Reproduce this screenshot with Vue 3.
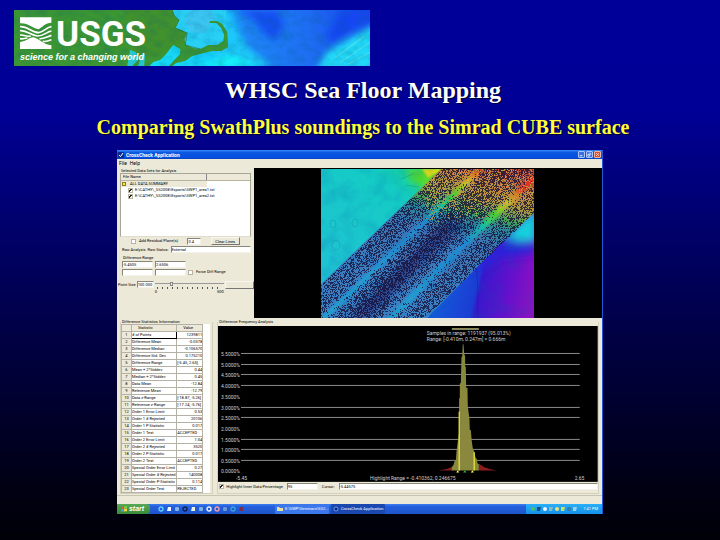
<script setup>
import { ref } from 'vue'

const files = [
  { name: 'E:\\CATHY\\_SS2008\\Exports\\SWP1_area1.txt', on: true },
  { name: 'E:\\CATHY\\_SS2008\\Exports\\SWP1_area2.txt', on: true }
]

const stats = [
  ['# of Points', '1239811'],
  ['Difference Mean', '-0.0378'],
  ['Difference Median', '-0.106570'],
  ['Difference Std. Dev', '0.175210'],
  ['Difference Range', '[-5.45, 2.65]'],
  ['Mean + 2*Stddev', '0.44'],
  ['Median + 2*Stddev', '0.45'],
  ['Data Mean', '-12.84'],
  ['Reference Mean', '-12.79'],
  ['Data z-Range', '[-18.87, -5.26]'],
  ['Reference z-Range', '[-17.24, -5.76]'],
  ['Order 1 Error Limit', '0.53'],
  ['Order 1 # Rejected', '20106'],
  ['Order 1 P-Statistic', '0.017'],
  ['Order 1 Test', 'ACCEPTED'],
  ['Order 2 Error Limit', '1.04'],
  ['Order 2 # Rejected', '3520'],
  ['Order 2 P-Statistic', '0.017'],
  ['Order 2 Test', 'ACCEPTED'],
  ['Special Order Error Limit', '0.27'],
  ['Special Order # Rejected', '140008'],
  ['Special Order P-Statistic', '0.114'],
  ['Special Order Test', 'REJECTED']
]
const isLeft = (v) => /^[A-Z[]/.test(v)

const axis = [
  { t: '5.5000%', y: 28, line: true },
  { t: '5.0000%', y: 39, line: true },
  { t: '4.5000%', y: 49, line: true },
  { t: '4.0000%', y: 60, line: true },
  { t: '3.5000%', y: 71, line: false },
  { t: '3.0000%', y: 82, line: true },
  { t: '2.5000%', y: 92, line: true },
  { t: '2.0000%', y: 103, line: false },
  { t: '1.5000%', y: 114, line: true },
  { t: '1.0000%', y: 124, line: true },
  { t: '0.5000%', y: 135, line: true },
  { t: '0.0000%', y: 145, line: false }
]

// Sounding speckle: one-pixel marks inside the survey swath, denser between the tracks.
function speckle() {
  let seed = 90210
  const rnd = () => {
    seed = (seed * 1664525 + 1013904223) % 4294967296
    return seed / 4294967296
  }
  const bell = (u, c, w) => Math.exp(-((u - c) ** 2) / (2 * w * w))
  let dark = ''
  let warm = ''
  let lime = ''
  for (let y = 0; y < 149; y++) {
    for (let x = 0; x < 213; x++) {
      const u = 0.69 * x + 0.72 * y
      const r = rnd()
      if (u < 83 || u > 178) continue
      const d = 0.46 + 0.16 * bell(u, 127, 7) - 0.42 * bell(u, 108, 3) - 0.42 * bell(u, 153, 4)
      const top = y < 36 + rnd() * 16 - (x - 150) * 0.1
      if (r < d) dark += `M${x} ${y}h1`
      else if (r > 0.88 && top && x > 104) warm += `M${x} ${y}h1`
      else if (r > 0.8 && top && x > 104) lime += `M${x} ${y}h1`
    }
  }
  return { dark, warm, lime }
}
const dots = speckle()

const highlight = ref(true)
const quick = ['#5fd0ff', '#e8f6ff', '#b5d8ff', '#10224e', '#f0f0e0', '#9fdcff', '#e9f2ff', '#f29aa8', '#8fb4e8', '#3aa0d8', '#7a3048']
const tray = ['#4ac06a', '#19508c', '#eef6ff', '#8ab8c8', '#f0e070', '#c8e060', '#3a78b0', '#9fd0f0']
</script>

<template>
  <main class="slide">
    <svg class="banner" viewBox="0 0 356 56" role="img" aria-label="USGS science for a changing world">
      <defs>
        <linearGradient id="sea" x1="150" y1="40" x2="356" y2="0" gradientUnits="userSpaceOnUse">
          <stop offset="0" stop-color="#18dcf8" />
          <stop offset=".28" stop-color="#14c8fa" />
          <stop offset=".4" stop-color="#1e84f6" />
          <stop offset=".7" stop-color="#1e6cf2" />
          <stop offset="1" stop-color="#1844f0" />
        </linearGradient>
        <filter id="soft" x="-20%" y="-20%" width="140%" height="140%"><feGaussianBlur stdDeviation="3" /></filter>
        <filter id="relief" x="0" y="0" width="100%" height="100%">
          <feTurbulence type="fractalNoise" baseFrequency=".09 .13" numOctaves="4" seed="6" />
          <feColorMatrix values="0 0 0 0 0  0 0 0 0 .1  0 0 0 0 .2  1.6 0 0 0 -.62" />
        </filter>
      </defs>
      <rect width="356" height="56" fill="url(#sea)" />
      <g filter="url(#soft)">
        <path d="M214 0L222 20L234 38L258 56H200V0Z" fill="#1cc8fa" />
        <path d="M222 0H262L270 14L262 30L250 24L240 10ZM312 26L326 2L348 2L336 22L318 34Z" fill="#1640f0" opacity=".75" />
        <path d="M360 14L332 30L312 42L302 60H360Z" fill="#20d8f8" />
        <path d="M180 58L215 44L250 58Z" fill="#18f0fa" />
      </g>
      <path d="M158 0H212V40H166Z" fill="#28d0f6" />
      <path d="M176 0H196L202 8L190 24L176 22L170 10Z" fill="#48c0f0" opacity=".6" />
      <path d="M320 48L350 26M326 52L356 32M334 54L356 42" stroke="#6ce8e4" stroke-width="1" opacity=".6" />
      <path d="M0 0H158L160 6L165 10L161 18L167 20L173 23L170 29L172 35L179 38L186 39L194 35L203 35L209 31L210 25L207 18L202 13L195 13L196 11L203 11L208 14L213 22L214 37L207 41L198 41L186 44L178 46L171 51L162 53L158 56H155L160 50L166 44L166 39L159 35L152 44L146 50L139 52L135 56H0Z" fill="#3c9632" />
      <path d="M110 0H158L163 10L160 18L172 24L170 34L158 34L146 46L120 50Z" fill="#468c28" opacity=".5" />
      <path d="M116 40L122 42L124 50L118 56H113ZM127 45L131 44L130 56H124Z" fill="#28c8d0" />
      <path d="M158 0L160 6L165 10L161 18L173 23L171 35L186 39" fill="none" stroke="#2f6a20" stroke-width=".6" />
      <rect width="356" height="56" filter="url(#relief)" opacity=".28" />
      <g transform="translate(-14 -10) scale(.3334)">
        <path d="M60 52H154V68C136 68 128 80 116 88C98 86 84 68 60 70Z" fill="#fff" />
        <path d="M60 147V126C80 124 90 110 100 112C118 116 130 134 154 136V147Z" fill="#fff" />
        <path d="M60 80C84 78 94 98 116 98C132 96 138 82 154 80M60 92C80 90 92 106 112 108C132 108 138 96 154 93M60 105C74 104 82 112 92 108M118 116C130 118 140 110 154 106M128 124C138 126 144 122 154 119M60 116C68 117 74 116 82 114" fill="none" stroke="#fff" stroke-width="5" />
      </g>
      <text x="42" y="36" class="usgs">USGS</text>
      <text x="6" y="50" class="tagline">science for a changing world</text>
    </svg>

    <header class="headings">
      <h1>WHSC Sea Floor Mapping</h1>
      <h2>Comparing SwathPlus soundings to the Simrad CUBE surface</h2>
    </header>

    <section class="window">
      <div class="titlebar">
        <svg class="appicon" viewBox="0 0 6 6"><rect width="6" height="6" rx="1" fill="#0a2a90" /><path d="M1 3L2.5 4.6L5 1" fill="none" stroke="#fff" /></svg>
        <span class="apptitle">CrossCheck Application</span>
        <button class="winbtn" aria-label="Minimize"><svg viewBox="0 0 6 6"><path d="M1 4.5H4" stroke="#fff" /></svg></button>
        <button class="winbtn" aria-label="Restore"><svg viewBox="0 0 6 6"><path d="M2 1.5H4.5V4M1 3H3V5H1Z" stroke="#fff" fill="none" stroke-width=".8" /></svg></button>
        <button class="winbtn close" aria-label="Close"><svg viewBox="0 0 6 6"><path d="M1.5 1.5L4.5 4.5M4.5 1.5L1.5 4.5" stroke="#fff" /></svg></button>
      </div>
      <nav class="menu"><a href="#">File</a><a href="#">Help</a></nav>

      <div class="upper">
        <div class="side">
          <fieldset class="group">
            <legend>Selected Data Sets for Analysis</legend>
            <div class="list">
              <div class="listhead"><span>File Name</span><span></span></div>
              <div class="summary"><i class="folder"></i>ALL DATA SUMMARY</div>
              <label v-for="f in files" :key="f.name" class="file"><input type="checkbox" :checked="f.on" />{{ f.name }}</label>
            </div>
            <div class="line residual">
              <label class="check"><input type="checkbox" />Add Residual Plane(s)</label>
              <input class="field tiny" aria-label="Plane size" value="0.4" />
              <button class="btn">Clear Lines</button>
            </div>
            <div class="line status">
              <span>Raw Analysis</span>
              <label for="status">Raw Status:</label>
              <input id="status" class="field grow" value="External" />
            </div>
          </fieldset>
          <fieldset class="group range">
            <legend>Difference Range</legend>
            <div class="line">
              <input class="field" aria-label="Minimum" value="-5.4505" /><input class="field" aria-label="Maximum" value="2.6506" />
            </div>
            <div class="line">
              <input class="field" aria-label="Forced minimum" /><input class="field" aria-label="Forced maximum" />
              <label class="check"><input type="checkbox" />Force Diff Range</label>
            </div>
          </fieldset>
          <div class="line point">
            <label for="psize">Point Size</label>
            <input id="psize" class="field mid" value="100.000" />
            <div class="slider">
              <input type="range" min="0" max="500" value="120" aria-label="Point size" />
              <div class="ticks"></div>
              <div class="ends"><span>0</span><span>500</span></div>
            </div>
            <button class="btn blank" aria-label="Apply"></button>
          </div>
        </div>

        <div class="view">
          <svg class="map" viewBox="0 0 213 149" role="img" aria-label="Sounding map">
            <defs>
              <linearGradient id="swath" x1="125" y1="140" x2="164" y2="0" gradientUnits="userSpaceOnUse">
                <stop offset="0" stop-color="#3c80c4" />
                <stop offset=".5" stop-color="#3c74b4" />
                <stop offset=".63" stop-color="#2c8898" />
                <stop offset=".7" stop-color="#48a058" />
                <stop offset=".8" stop-color="#a89838" />
                <stop offset=".92" stop-color="#b87838" />
                <stop offset="1" stop-color="#c04c30" />
              </linearGradient>
              <linearGradient id="track" x1="90" y1="149" x2="164" y2="0" gradientUnits="userSpaceOnUse">
                <stop offset="0" stop-color="#20a0d0" />
                <stop offset=".55" stop-color="#2088d0" />
                <stop offset=".68" stop-color="#18c0a8" />
                <stop offset=".78" stop-color="#50d828" />
                <stop offset=".88" stop-color="#d0c828" />
                <stop offset="1" stop-color="#e03020" />
              </linearGradient>
              <linearGradient id="deep" x1="120" y1="120" x2="213" y2="140" gradientUnits="userSpaceOnUse">
                <stop offset="0" stop-color="#1458d8" />
                <stop offset=".36" stop-color="#1c3cd4" />
                <stop offset=".4" stop-color="#3818cc" />
                <stop offset=".7" stop-color="#6410cc" />
                <stop offset="1" stop-color="#9410c0" />
              </linearGradient>
              <linearGradient id="shelf" x1="0" y1="120" x2="110" y2="0" gradientUnits="userSpaceOnUse">
                <stop offset="0" stop-color="#20c0d4" />
                <stop offset=".75" stop-color="#14ccc4" />
                <stop offset=".9" stop-color="#14d0a0" />
                <stop offset="1" stop-color="#20d878" />
              </linearGradient>
              <filter id="haze" x="-30%" y="-30%" width="160%" height="160%"><feGaussianBlur stdDeviation="4" /></filter>
              <filter id="blend" x="-10%" y="-10%" width="120%" height="120%"><feGaussianBlur stdDeviation="1.2" /></filter>
              <filter id="ripple" x="0" y="0" width="100%" height="100%">
                <feTurbulence type="fractalNoise" baseFrequency=".06" numOctaves="3" seed="11" />
                <feColorMatrix values="0 0 0 0 0  0 0 0 0 .1  0 0 0 0 .4  1.4 0 0 0 -.6" />
              </filter>
              <clipPath id="frame"><rect width="213" height="149" /></clipPath>
            </defs>
            <g clip-path="url(#frame)">
              <rect width="213" height="149" fill="url(#shelf)" />
              <path d="M84 0L92 14L110 20L132 0Z" fill="#58e020" filter="url(#haze)" />
              <path d="M101 0L107 9L122 0Z" fill="#e8e010" filter="url(#blend)" />
              <path d="M106 149L154 93L184 68L213 40V149Z" fill="url(#deep)" />
              <path d="M150 98L184 72L213 76V84L180 88L156 104Z" fill="#2c20dc" filter="url(#haze)" />
              <path d="M181 70L216 36V73L198 75Z" fill="#18d0dc" filter="url(#haze)" />
              <path d="M154 92C158 108 156 126 157 149" stroke="#1c20a0" fill="none" opacity=".6" />
              <path d="M0 115L120 0H213V44L184 70L106 149H0Z" fill="url(#swath)" />
              <path d="M28 149L130 46L144 52L48 149Z" fill="#281464" opacity=".6" filter="url(#haze)" />
              <g filter="url(#blend)">
                <path d="M0 152L109 48L160 0" stroke="url(#track)" stroke-width="5" fill="none" />
                <path d="M68 152L109 109L164 55L216 6" stroke="url(#track)" stroke-width="6" fill="none" />
              </g>
              <g fill="none" stroke="#177a90" opacity=".3">
                <ellipse cx="12" cy="55" rx="3" ry="4" /><ellipse cx="34" cy="54" rx="3" ry="4" />
                <ellipse cx="15" cy="76" rx="4" ry="5" /><path d="M80 10L94 4M84 16L98 18" />
              </g>
              <rect width="213" height="149" filter="url(#ripple)" opacity=".3" />
              <g fill="none" stroke-width="1">
                <path :d="dots.dark" stroke="#140e34" transform="translate(0 .5)" opacity=".76" />
                <path :d="dots.warm" stroke="#dc8c48" transform="translate(0 .5)" opacity=".8" />
                <path :d="dots.lime" stroke="#a8b840" transform="translate(0 .5)" opacity=".8" />
              </g>
            </g>
          </svg>
        </div>
      </div>

      <div class="lower">
        <fieldset class="group statbox">
          <legend>Difference Statistics Information</legend>
          <div class="tablewrap">
            <table>
              <thead><tr><th></th><th>Statistic</th><th>Value</th></tr></thead>
              <tbody>
                <tr v-for="(s, i) in stats" :key="s[0]">
                  <th scope="row">{{ i + 1 }}</th>
                  <td :class="{ picked: i === 0 }">{{ s[0] }}</td>
                  <td :class="isLeft(s[1]) ? 'left' : 'num'">{{ s[1] }}</td>
                </tr>
              </tbody>
            </table>
          </div>
        </fieldset>

        <fieldset class="group chartbox">
          <legend>Difference Frequency Analysis</legend>
          <svg class="chart" viewBox="0 0 380 156" role="img" aria-label="Difference frequency histogram">
            <rect width="380" height="156" fill="#000" />
            <g v-for="a in axis" :key="a.t">
              <path v-if="a.line" :d="`M23 ${a.y - 0.5}H362`" stroke="#8c8c8c" />
              <text x="3" :y="a.y + 2">{{ a.t }}</text>
            </g>
            <g transform="translate(192 -11) scale(.3334)">
              <path d="M88 467L110 462L125 457V467ZM207 446L222 456L240 462L260 467H207Z" fill="#8c1c1c" />
              <path d="M125 467V458L131 450L135 437H138L140 410L144 380L147 355L148 250H150V205H153L155 125H157L159 88H161L163 115L166 125V155H168L169 218H173L174 275L179 312L180 345H183L186 380L189 400L194 412L197 428L201 432L203 445L207 448V467Z" fill="#8a883c" />
              <path d="M148 290V467M193 412V467" stroke="#ffff40" stroke-width="3" />
              <path d="M126 42H207" stroke="#85865a" stroke-width="6" />
              <path d="M139 473L144 466L148 473ZM183 473L188 466L192 473Z" fill="#ffff60" />
              <path d="M160 473L165 466L170 473Z" fill="#30b050" />
            </g>
            <text x="209" y="9">Samples in range: 1191937 (95.013%)</text>
            <text x="209" y="15">Range: [-0.410m, 0.247m] = 0.666m</text>
            <text x="18" y="154">-5.45</text>
            <text x="152" y="154">Highlight Range = -0.410362, 0.246675</text>
            <text x="357" y="154">2.65</text>
          </svg>
          <div class="line cursor">
            <label class="check"><input v-model="highlight" type="checkbox" />Highlight Inner Data Percentage</label>
            <input class="field" aria-label="Percentage" value="95" />
            <label for="cur">Cursor:</label>
            <input id="cur" class="field grow" value="-5.44575" />
          </div>
        </fieldset>
      </div>

      <div class="statusbar"></div>
      <footer class="taskbar">
        <button class="start"><svg viewBox="0 0 6 6"><path d="M0 1L2.6 .5V2.7L0 3Z" fill="#f05030" /><path d="M3 .5L6 0V2.4L3 2.7Z" fill="#80d040" /><path d="M0 3.4L2.6 3.1V5.4L0 5.6Z" fill="#50a0f0" /><path d="M3 3.1L6 2.8V5.2L3 5.4Z" fill="#f8d040" /></svg>start</button>
        <div class="icons quick">
          <svg v-for="(c, i) in quick" :key="i" viewBox="0 0 6 6">
            <circle v-if="i % 3 === 0 || i === 7" cx="3" cy="3" r="2" fill="none" :stroke="c" stroke-width="1.4" />
            <path v-else-if="i % 3 === 1" d="M1 5L2 1H5L5 5Z" :fill="c" />
            <path v-else d="M1 1H5V5H1ZM2 3H4" :fill="c" stroke="#2458b8" stroke-width=".6" />
          </svg>
        </div>
        <button class="task"><svg viewBox="0 0 6 6"><path d="M0 1H2L3 2H6V5H0Z" fill="#e8e0a0" /></svg>E:\SWP\Seminars\SS2...</button>
        <button class="task active"><svg viewBox="0 0 6 6"><circle cx="3" cy="3" r="2" fill="#0a2070" stroke="#80b0ff" stroke-width=".8" /></svg>CrossCheck Application</button>
        <div class="icons tray">
          <svg v-for="(c, i) in tray" :key="i" viewBox="0 0 6 6"><path v-if="i % 2" d="M1 1H5L4 5H1Z" :fill="c" /><circle v-else cx="3" cy="3" r="2" :fill="c" /></svg>
          <span>7:41 PM</span>
        </div>
      </footer>
    </section>
  </main>
</template>

<style>
body { margin: 0; background: #000; }
</style>

<style scoped>
* { box-sizing: border-box; }
.slide {
  min-height: 100vh;
  padding: 10px 14px 26px;
  background: linear-gradient(#000099 0%, #000096 20%, #000048 60%, #000010 92%, #000008 100%);
  display: flex;
  flex-direction: column;
}
.banner { display: block; width: 51.5%; }
.usgs { font: bold 35px Roboto, "Liberation Sans", Arial, sans-serif; fill: #fff; }
.tagline { font: italic bold 9px "Liberation Sans", Arial, sans-serif; fill: #fff; }
.headings { padding: 10px 0 11px 6px; text-align: center; font-family: "Liberation Serif", "Times New Roman", serif; text-shadow: 1px 1px 1px #000030; }
h1, h2 { margin: 0; font-weight: bold; }
h1 { font-size: 24px; line-height: 28px; color: #fff; }
h2 { font-size: 20px; line-height: 24px; margin-top: 11px; color: #ffff3c; }

.window {
  width: 70.25%;
  align-self: center;
  background: #ece9d8;
  border-right: 1px solid #2058d8;
  font: 4px/6px Roboto, "Liberation Sans", Arial, sans-serif;
  color: #000;
}
button, input { font: inherit; color: inherit; margin: 0; padding: 0; border-radius: 0; }
svg { display: block; }
.titlebar { display: flex; align-items: center; height: 9px; padding: 0 1px; gap: 1px; background: linear-gradient(#3a8af8, #0a56e0 30%, #0650e0 85%, #0a40b8); color: #fff; }
.appicon { width: 6px; height: 6px; }
.apptitle { flex: 1; font-size: 5px; font-weight: bold; padding-left: 1px; }
.winbtn { width: 7px; height: 7px; border: 1px solid #a8c4f8; border-radius: 1px; background: #3a70e0; }
.winbtn svg { width: 5px; height: 5px; }
.close { background: #d85030; border-color: #f0b0a0; }
.menu { display: flex; gap: 3px; height: 9px; padding: 1px 2px; font-size: 5px; }
.menu a { color: inherit; text-decoration: none; }

.upper { display: flex; height: 150px; }
.side { width: 28.2%; padding: 0 3px; min-width: 0; }
.group { margin: 0; padding: 0; border: 1px solid #d4d0be; border-top: 0; min-width: 0; }
legend { padding: 0 1px; height: 5px; line-height: 5px; white-space: nowrap; }
.side .group { border-width: 0; }
.list { height: 64px; background: #fff; border: 1px solid #a8a698; border-bottom-color: #e0ddd0; white-space: nowrap; overflow: hidden; }
.listhead { display: flex; background: #ece9d8; border-bottom: 1px solid #b8b4a0; height: 7px; }
.listhead span:first-child { width: 67%; border-right: 1px solid #888; padding-left: 2px; }
.summary { display: flex; align-items: center; gap: 4px; width: 67%; background: #ece9d8; padding-left: 1px; height: 6px; }
.folder { width: 4px; height: 4px; background: #f8e840; border: 1px solid #888020; }
.file { display: flex; align-items: center; gap: 2px; padding-left: 7px; height: 6px; }
input[type='checkbox'] { appearance: none; flex: none; width: 5px; height: 5px; background: #fff; border: 1px solid #b8b4a4; }
input[type='checkbox']:checked { background: linear-gradient(135deg, #fff 30%, #222 31% 60%, #fff 61%); }
.line { display: flex; align-items: center; gap: 2px; height: 8px; white-space: nowrap; }
.check { display: flex; align-items: center; gap: 3px; }
.field { width: 31px; height: 7px; background: #fff; border: 1px solid #888678; border-right-color: #f4f2e8; border-bottom-color: #f4f2e8; }
.tiny { width: 14px; }
.mid { width: 17px; }
.grow { flex: 1; min-width: 0; }
.btn { width: 29px; height: 8px; line-height: 5px; background: #ece9d8; border: 1px solid #f8f6ee; border-right-color: #777; border-bottom-color: #777; }
.residual { padding: 0 11px; justify-content: space-between; }
.status { height: 9px; padding-left: 2px; }
.range { padding-left: 2px; margin-top: 1px; }
.point { margin: 5px -3px 0 -2px; align-items: flex-start; line-height: 7px; gap: 1px; }
.slider { flex: 1; min-width: 0; padding-top: 1px; }
input[type='range'] { appearance: none; display: block; width: 100%; height: 4px; background: linear-gradient(#999, #999) 0 1px / 100% 1px no-repeat; }
input[type='range']::-webkit-slider-thumb { appearance: none; width: 3px; height: 4px; background: #ece9d8; border: 1px solid #888; }
.ticks { height: 2px; margin: 1px 2px 0; background: repeating-linear-gradient(90deg, #555 0 1px, transparent 1px 5px); }
.ends { display: flex; justify-content: space-between; line-height: 6px; }

.view { flex: 1; min-width: 0; background: #000; display: flex; justify-content: center; align-items: center; }
.map { height: 149px; }

.lower { display: flex; gap: 4px; padding: 1px 3px 0; }
.statbox { width: 19.5%; }
.chartbox { flex: 1; }
.tablewrap { background: #fff; margin-right: 2px; }
table { width: 92%; border-collapse: collapse; table-layout: fixed; }
th, td { height: 7px; padding: 0; line-height: 6px; white-space: nowrap; overflow: hidden; border: 1px solid #b4b2a6; font-weight: normal; }
th { background: #ece9d8; }
th:first-child { width: 10px; }
thead th { text-align: left; padding-left: 6px; }
thead th:last-child { width: 26px; }
.picked { border: 1px solid #000; }
.num { text-align: right; }
.chart { width: 100%; margin-top: 2px; }
.chart text { font: 5px Roboto, "Liberation Sans", Arial, sans-serif; fill: #d0d0d0; }
.cursor { margin-top: 1px; padding-left: 1px; gap: 4px; }
.cursor .check { gap: 2px; }
.statusbar { height: 9px; margin-top: 1px; border-top: 1px solid #c8c4b4; }

.taskbar { display: flex; align-items: stretch; height: 10px; background: linear-gradient(#3c80f0, #2460dc 25%, #1e54cc); color: #fff; }
.start { display: flex; align-items: center; gap: 2px; width: 33px; padding-left: 4px; border: 0; border-radius: 0 4px 4px 0; background: linear-gradient(#58a858, #388a38); font: italic bold 7px/8px "Liberation Sans", Arial, sans-serif; }
.start svg, .task svg, .icons svg { width: 6px; height: 6px; flex: none; }
.icons { display: flex; align-items: center; gap: 2px; }
.quick { padding-left: 8px; width: 125px; }
.task { display: flex; align-items: center; gap: 2px; width: 54px; margin-right: 2px; padding-left: 2px; border: 0; border-radius: 1px; background: #3c78ec; white-space: nowrap; overflow: hidden; }
.active { background: #1a48b0; }
.tray { margin-left: auto; padding: 0 4px; gap: 0; background: linear-gradient(#28b0f8, #1490e8); }
.tray span { margin-left: 5px; }
</style>
